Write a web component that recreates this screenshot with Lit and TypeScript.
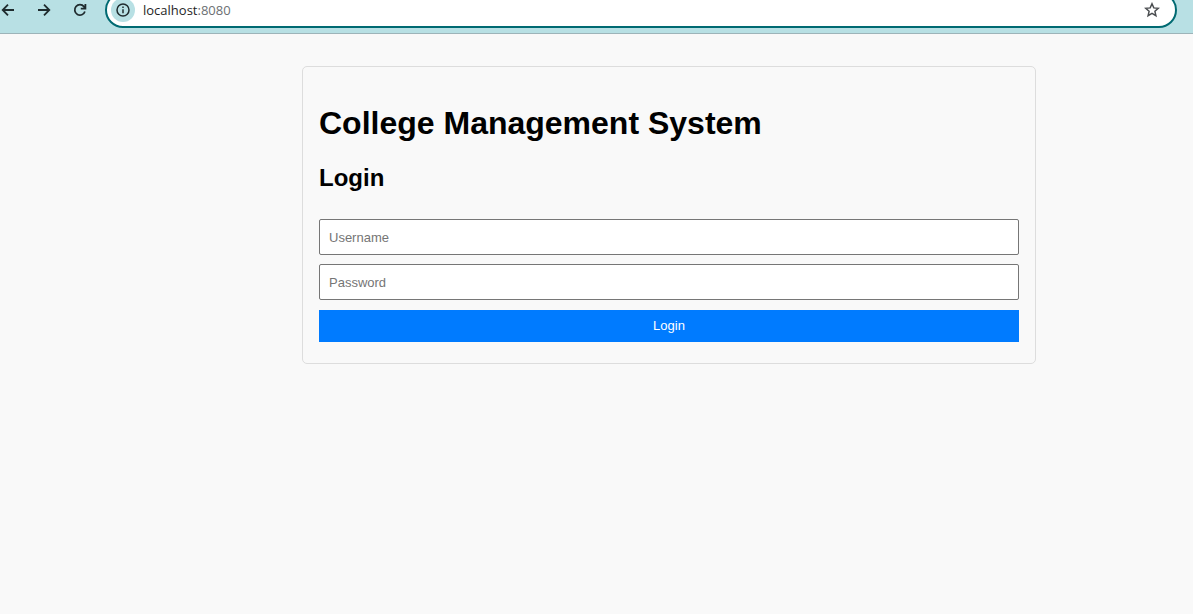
import { LitElement, html, css } from "lit";
import { customElement } from "lit/decorators.js";

@customElement("browser-bar")
class BrowserBar extends LitElement {
  static styles = css`
    :host {
      display: block;
    }
    .bar {
      display: flex;
      align-items: flex-end;
      box-sizing: border-box;
      height: 34px;
      padding: 0 16px 5px 0;
      overflow: hidden;
      background: #b8e0e4;
      border-bottom: 1px solid #9db4b9;
    }
    button {
      display: flex;
      align-items: center;
      justify-content: center;
      flex: none;
      width: 36px;
      height: 36px;
      padding: 0;
      border: 0;
      background: none;
      color: #1f2b2e;
    }
    svg {
      display: block;
    }
    .nav {
      display: flex;
      flex: none;
      margin-left: -10px;
      margin-right: 7px;
    }
    .address {
      display: flex;
      align-items: center;
      flex: 1;
      box-sizing: border-box;
      height: 36px;
      padding: 0 5px 0 4px;
      border: 2px solid #006a72;
      border-radius: 18px;
      background: #fff;
    }
    .address .info {
      width: 24px;
      height: 24px;
      border-radius: 12px;
      background: #b8e0e4;
    }
    .url {
      flex: 1;
      padding-left: 8px;
      font: 13px/20px "Open Sans", "Noto Sans", sans-serif;
      color: #1f1f1f;
    }
    .port {
      color: #6b6f72;
    }
    .address .star {
      color: #4a4d50;
    }
  `;

  render() {
    return html`
      <header class="bar">
        <nav class="nav">
          <button aria-label="Back">
            <svg width="16" height="16" viewBox="0 0 16 16" fill="none" stroke="currentColor" stroke-width="1.8">
              <path d="M14 8H3M8 2.7 2.7 8 8 13.3" />
            </svg>
          </button>
          <button aria-label="Forward">
            <svg width="16" height="16" viewBox="0 0 16 16" fill="none" stroke="currentColor" stroke-width="1.8">
              <path d="M2 8h11M8 2.7 13.3 8 8 13.3" />
            </svg>
          </button>
          <button aria-label="Reload">
            <svg width="16" height="16" viewBox="0 0 16 16" fill="none" stroke="currentColor" stroke-width="1.8">
              <path d="M12.9 9.5A5.2 5.2 0 1 1 12 4.6l1.2 1.6M13.4 2v4.6H8.8" />
            </svg>
          </button>
        </nav>
        <div class="address">
          <button class="info" aria-label="Site information">
            <svg width="16" height="16" viewBox="0 0 16 16" fill="none" stroke="currentColor" stroke-width="1.5">
              <circle cx="8" cy="8" r="6" />
              <path d="M8 7.2v4M8 4.6v1.5" />
            </svg>
          </button>
          <span class="url">localhost<span class="port">:8080</span></span>
          <button class="star" aria-label="Bookmark this page">
            <svg width="16" height="16" viewBox="0 0 16 16" fill="none" stroke="currentColor" stroke-width="1.5">
              <path d="m8 1.8 1.8 4.1 4.5.4-3.4 3 1 4.4L8 11.4l-3.9 2.3 1-4.4-3.4-3 4.5-.4z" />
            </svg>
          </button>
        </div>
      </header>
    `;
  }
}

@customElement("login-card")
class LoginCard extends LitElement {
  static styles = css`
    :host {
      display: block;
      padding: 16px 16px 21px;
      border: 1px solid #ddd;
      border-radius: 5px;
      font-family: "Liberation Sans", Arial, sans-serif;
      color: #000;
    }
    h1 {
      margin: 22px 0;
      font-size: 32px;
      line-height: 37px;
    }
    h2 {
      margin: 0 0 27px;
      font-size: 24px;
      line-height: 28px;
    }
    h1,
    h2 {
      padding-bottom: 0;
    }
    form,
    .fields {
      display: grid;
    }
    form {
      gap: 10px;
    }
    .fields {
      gap: 9px;
    }
    input,
    button {
      box-sizing: border-box;
      width: 100%;
      margin: 0;
      padding: 8px;
      font: 13px/16px "Liberation Sans", Arial, sans-serif;
    }
    input {
      height: 36px;
      padding: 8px 9px;
      border: 1px solid #767676;
      border-radius: 2px;
      background: #fff;
    }
    input::placeholder {
      color: #757575;
    }
    button {
      border: 0;
      background: #007bff;
      color: #fff;
      cursor: pointer;
    }
  `;

  render() {
    return html`
      <h1>College Management System</h1>
      <h2>Login</h2>
      <form @submit=${(e: Event) => e.preventDefault()}>
        <div class="fields">
          <input type="text" name="username" placeholder="Username" aria-label="Username" />
          <input type="password" name="password" placeholder="Password" aria-label="Password" />
        </div>
        <button type="submit">Login</button>
      </form>
    `;
  }
}

@customElement("app-root")
class AppRoot extends LitElement {
  static styles = css`
    :host {
      display: block;
      min-height: 100vh;
      background: #f9f9f9;
    }
    main {
      padding: 32px 157px 32px 302px;
    }
  `;

  render() {
    return html`
      <browser-bar></browser-bar>
      <main><login-card></login-card></main>
    `;
  }
}
